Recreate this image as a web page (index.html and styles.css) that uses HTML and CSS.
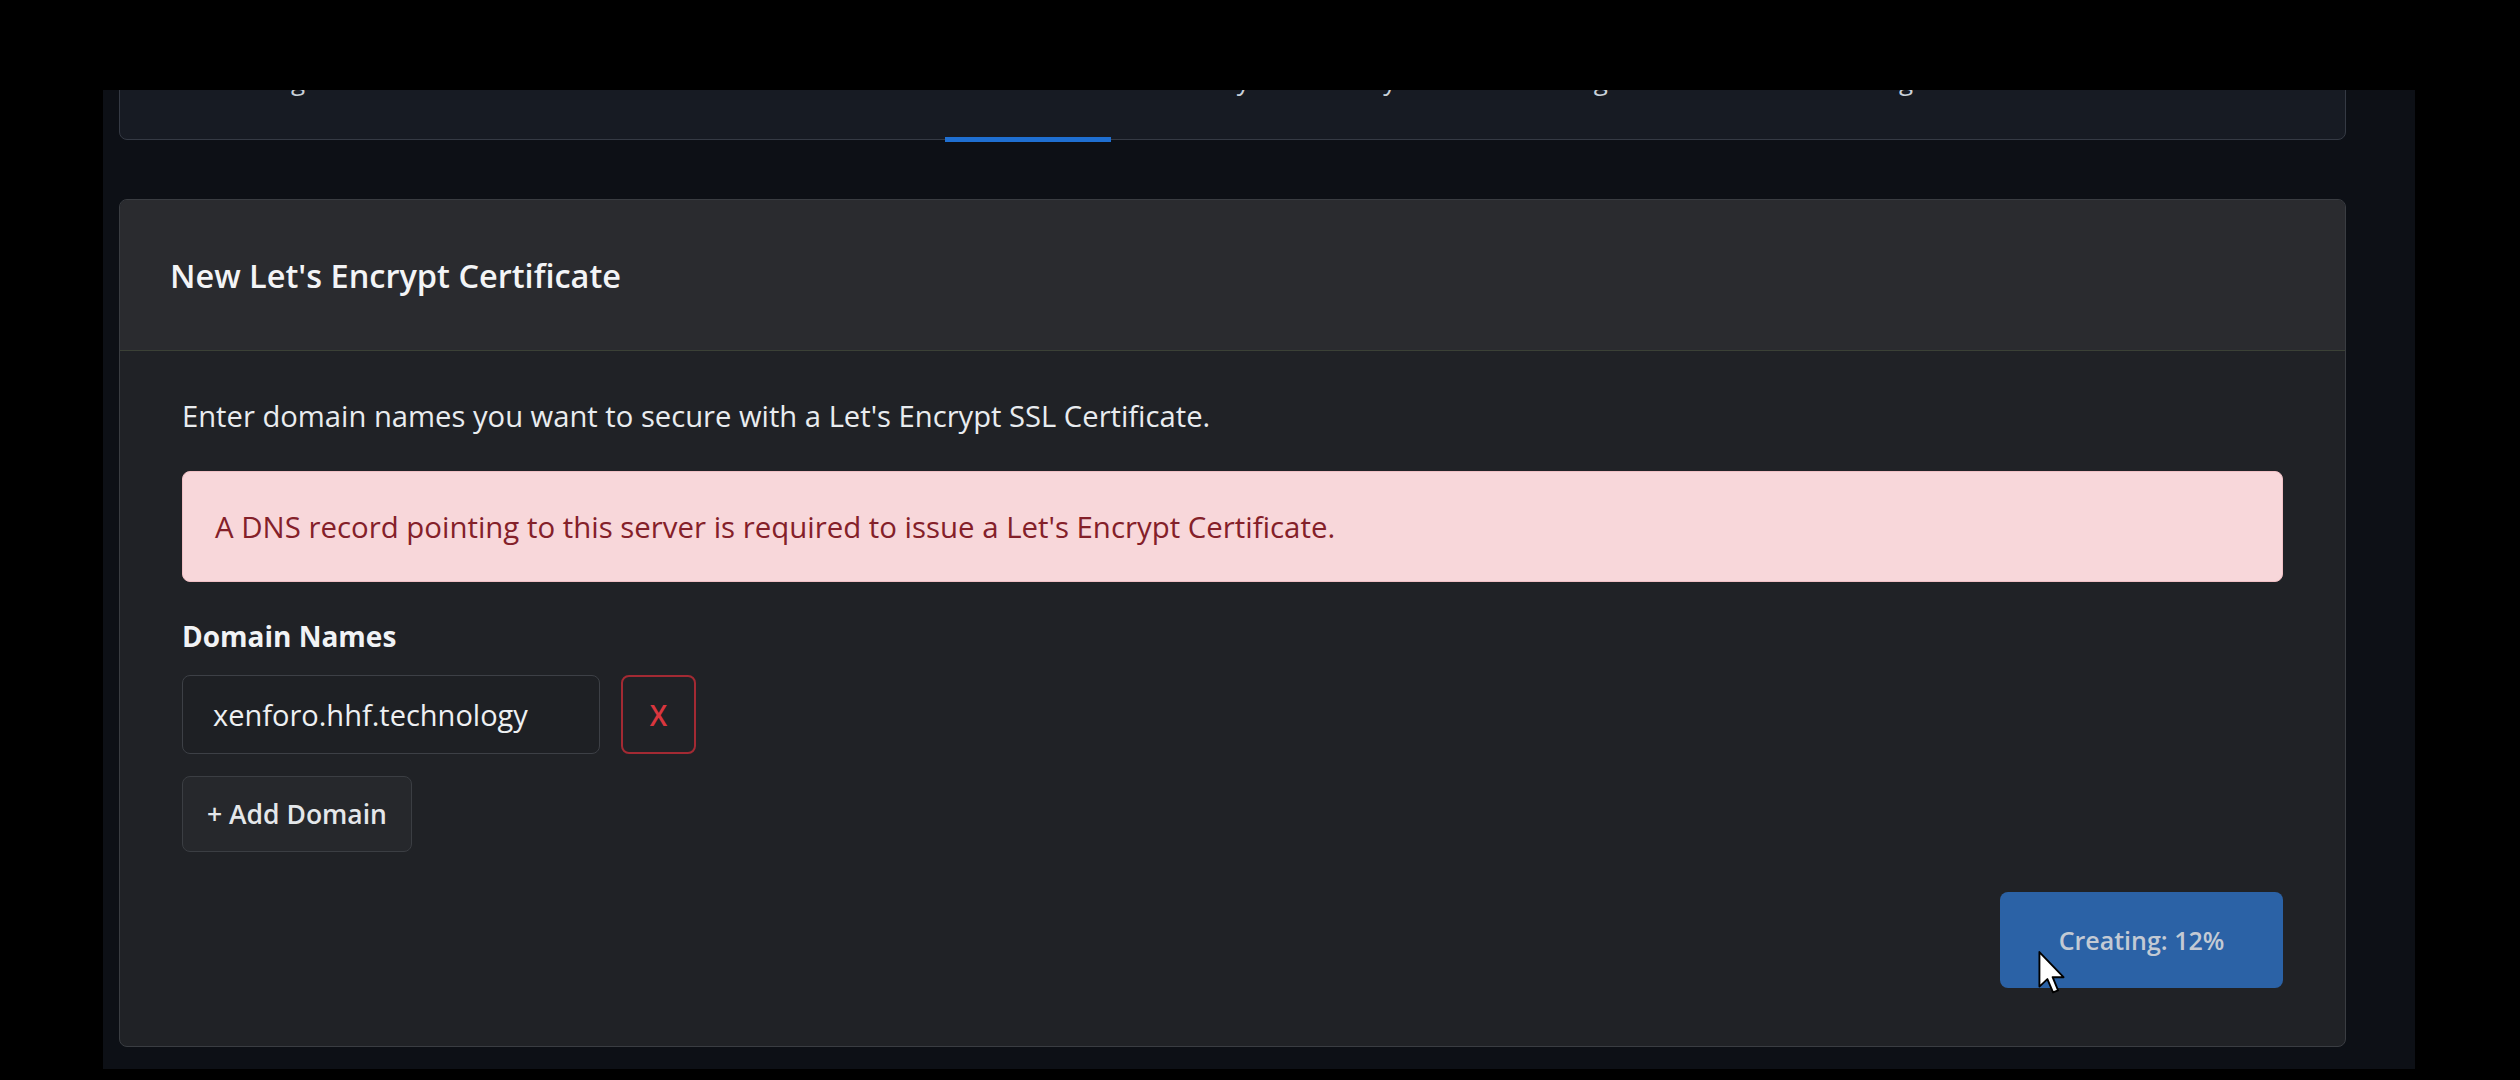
FILE: index.html
```html
<!DOCTYPE html>
<html lang="en">
<head>
    <meta charset="UTF-8">
    <meta name="viewport" content="width=device-width, initial-scale=1.0">
    <title>New Let's Encrypt Certificate</title>
    <link rel="stylesheet" href="styles.css">
</head>
<body>
    <div class="screen">
        <div class="page">
            <nav class="tabs-card">
                <a class="tab">Settings</a>
                <a class="tab">Nodes</a>
                <a class="tab">Databases</a>
                <a class="tab">Permissions</a>
                <a class="tab active">SSL/TLS</a>
                <a class="tab">Security</a>
                <a class="tab">Proxy</a>
                <a class="tab">Monitoring</a>
                <a class="tab">Metrics</a>
                <a class="tab">Usage</a>
            </nav>

            <div class="card">
                <div class="card-header">
                    <h2 class="card-title">New Let's Encrypt Certificate</h2>
                </div>
                <div class="card-body">
                    <p class="intro">Enter domain names you want to secure with a Let's Encrypt SSL Certificate.</p>

                    <div class="alert">A DNS record pointing to this server is required to issue a Let's Encrypt Certificate.</div>

                    <label class="field-label">Domain Names</label>
                    <div class="domain-row">
                        <input type="text" class="form-control" value="xenforo.hhf.technology">
                        <button class="btn-remove">X</button>
                    </div>
                    <button class="btn-add">+ Add Domain</button>

                    <div class="actions">
                        <button class="btn-create">
                            Creating: 12%
                            <svg class="cursor" width="28" height="44" viewBox="0 0 13 21">
                                <path d="M0.5 0.5 L0.5 17 L4.3 13.4 L7 19.8 L9.4 18.8 L6.8 12.5 L12 12.5 Z" fill="#fff" stroke="#000" stroke-width="0.9" stroke-linejoin="round"/>
                            </svg>
                        </button>
                    </div>
                </div>
            </div>
        </div>
    </div>
</body>
</html>
```

FILE: styles.css
```css
* {
    margin: 0;
    padding: 0;
    box-sizing: border-box;
    font-family: 'Open Sans', 'Noto Sans', 'Liberation Sans', sans-serif;
}

body {
    background: #000;
    width: 2520px;
    height: 1080px;
    overflow: hidden;
}

.screen {
    margin: 90px 105px 0 103px;
    height: 979px;
    background: #0d1016;
    overflow: hidden;
}

.page {
    padding: 0 69px 0 16px;
    margin-top: -40px;
}

/* tabs (scrolled mostly out of view) */
.tabs-card {
    display: flex;
    gap: 6px;
    height: 90px;
    padding: 0 40px 0 65px;
    background: #171b23;
    border: 1px solid #353a44;
    border-radius: 8px;
}

.tab {
    position: relative;
    padding: 10px 36px 0;
    font-size: 26px;
    line-height: 39px;
    color: #c9d1d9;
}

.tab.active {
    color: #e6edf3;
}

.tab.active::after {
    content: '';
    position: absolute;
    left: 0;
    right: 0;
    bottom: -3px;
    height: 5px;
    background: #1f6fd1;
}

/* card */
.card {
    margin-top: 59px;
    border: 1px solid #3a3d42;
    border-radius: 8px;
    background: #202226;
    overflow: hidden;
}

.card-header {
    height: 151px;
    padding: 0 50px;
    display: flex;
    align-items: center;
    background: #2a2b2f;
    border-bottom: 1px solid #3b4136;
}

.card-title {
    font-size: 32.5px;
    font-weight: 600;
    color: #f3f4f6;
}

.card-body {
    padding: 45px 62px 58px;
}

.intro {
    font-size: 29.2px;
    line-height: 40px;
    color: #e9ecef;
}

.alert {
    margin-top: 35px;
    height: 111px;
    display: flex;
    align-items: center;
    padding: 0 32px;
    background: #f8d7da;
    border: 1px solid #f1c0c5;
    border-radius: 8px;
    color: #842029;
    font-size: 29.4px;
}

.field-label {
    display: block;
    margin-top: 34px;
    font-size: 28px;
    line-height: 40px;
    font-weight: 700;
    color: #f1f3f5;
}

.domain-row {
    display: flex;
    gap: 21px;
    margin-top: 19px;
}

.form-control {
    width: 418px;
    height: 79px;
    padding: 0 30px;
    background: #1e2024;
    border: 1px solid #3d4046;
    border-radius: 8px;
    color: #eef0f2;
    font-size: 29px;
    outline: none;
}

.btn-remove {
    width: 75px;
    height: 79px;
    background: transparent;
    border: 2px solid #a32a33;
    border-radius: 8px;
    color: #d9363e;
    font-size: 28px;
    font-weight: 600;
}

.btn-add {
    margin-top: 22px;
    width: 230px;
    height: 76px;
    background: #26282c;
    border: 1px solid #3b3e43;
    border-radius: 8px;
    color: #e4e7ea;
    font-size: 26.5px;
    font-weight: 600;
}

.actions {
    display: flex;
    justify-content: flex-end;
    margin-top: 40px;
}

.btn-create {
    position: relative;
    width: 283px;
    height: 96px;
    background: #2b62a6;
    border: none;
    border-radius: 8px;
    color: #c3cad4;
    font-size: 25px;
    font-weight: 600;
}

.cursor {
    position: absolute;
    left: 38px;
    top: 59px;
}
```
